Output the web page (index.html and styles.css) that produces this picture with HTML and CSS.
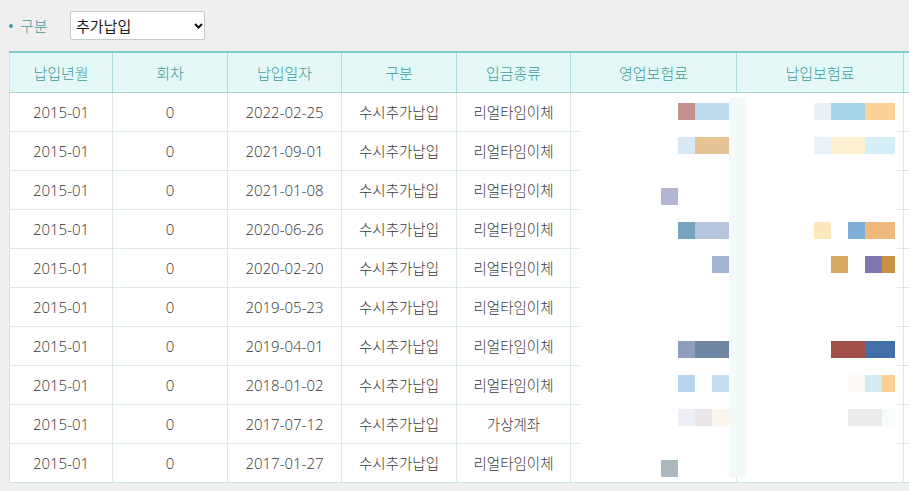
FILE: index.html
```html
<!DOCTYPE html>
<html lang="ko">
<head>
<meta charset="utf-8">
<title>추가납입 내역</title>
<link rel="stylesheet" href="styles.css">
</head>
<body>
<div class="page">
  <div class="filter">
    <span class="filter-label">구분</span>
    <div class="select-wrap">
      <select class="select">
        <option>추가납입</option>
      </select>
      <svg class="select-arrow" width="9" height="6" viewBox="0 0 9 6"><path d="M1 1 L4.5 4.5 L8 1" fill="none" stroke="#111" stroke-width="2"/></svg>
    </div>
  </div>

  <div class="table-wrap">
    <table class="grid">
      <colgroup>
        <col class="c1"><col class="c2"><col class="c3"><col class="c4"><col class="c5"><col class="c6"><col class="c7"><col class="c8">
      </colgroup>
      <thead>
        <tr>
          <th>납입년월</th><th>회차</th><th>납입일자</th><th>구분</th><th>입금종류</th><th>영업보험료</th><th>납입보험료</th><th></th>
        </tr>
      </thead>
      <tbody>
        <tr><td class="num">2015-01</td><td class="num">0</td><td class="num">2022-02-25</td><td>수시추가납입</td><td>리얼타임이체</td><td></td><td></td><td></td></tr>
        <tr><td class="num">2015-01</td><td class="num">0</td><td class="num">2021-09-01</td><td>수시추가납입</td><td>리얼타임이체</td><td></td><td></td><td></td></tr>
        <tr><td class="num">2015-01</td><td class="num">0</td><td class="num">2021-01-08</td><td>수시추가납입</td><td>리얼타임이체</td><td></td><td></td><td></td></tr>
        <tr><td class="num">2015-01</td><td class="num">0</td><td class="num">2020-06-26</td><td>수시추가납입</td><td>리얼타임이체</td><td></td><td></td><td></td></tr>
        <tr><td class="num">2015-01</td><td class="num">0</td><td class="num">2020-02-20</td><td>수시추가납입</td><td>리얼타임이체</td><td></td><td></td><td></td></tr>
        <tr><td class="num">2015-01</td><td class="num">0</td><td class="num">2019-05-23</td><td>수시추가납입</td><td>리얼타임이체</td><td></td><td></td><td></td></tr>
        <tr><td class="num">2015-01</td><td class="num">0</td><td class="num">2019-04-01</td><td>수시추가납입</td><td>리얼타임이체</td><td></td><td></td><td></td></tr>
        <tr><td class="num">2015-01</td><td class="num">0</td><td class="num">2018-01-02</td><td>수시추가납입</td><td>리얼타임이체</td><td></td><td></td><td></td></tr>
        <tr><td class="num">2015-01</td><td class="num">0</td><td class="num">2017-07-12</td><td>수시추가납입</td><td>가상계좌</td><td></td><td></td><td></td></tr>
        <tr><td class="num">2015-01</td><td class="num">0</td><td class="num">2017-01-27</td><td>수시추가납입</td><td>리얼타임이체</td><td></td><td></td><td></td></tr>
      </tbody>
    </table>

    <div class="mosaic" aria-hidden="true">
      <div class="strip"></div>
      <!-- row 1 -->
      <i style="grid-area:2/3;background:#c4918e"></i>
      <i style="grid-area:2/4/3/6;background:#c2dcef"></i>
      <i style="grid-area:2/11;background:#e8f0f8"></i>
      <i style="grid-area:2/12/3/14;background:#a9d5e8"></i>
      <i style="grid-area:2/14/3/16;background:#fdd199"></i>
      <!-- row 2 -->
      <i style="grid-area:4/3;background:#d8e8f5"></i>
      <i style="grid-area:4/4/5/6;background:#e6c493"></i>
      <i style="grid-area:4/11;background:#ebf3fa"></i>
      <i style="grid-area:4/12/5/14;background:#fdf0cf"></i>
      <i style="grid-area:4/14/5/16;background:#d5eff6"></i>
      <!-- row 3 -->
      <i style="grid-area:7/2;background:#b4b6d4"></i>
      <!-- row 4 -->
      <i style="grid-area:9/3;background:#76a4bd"></i>
      <i style="grid-area:9/4/10/6;background:#b6c6df"></i>
      <i style="grid-area:9/11;background:#fde8bd"></i>
      <i style="grid-area:9/13;background:#7fafd8"></i>
      <i style="grid-area:9/14/10/16;background:#efb87d"></i>
      <!-- row 5 -->
      <i style="grid-area:11/5;background:#a2b4d4"></i>
      <i style="grid-area:11/12;background:#d9a862"></i>
      <i style="grid-area:11/14;background:#8077ac"></i>
      <i style="grid-area:11/15;background:#c99048"></i>
      <!-- row 7 -->
      <i style="grid-area:16/3;background:#8e9cbe"></i>
      <i style="grid-area:16/4/17/6;background:#6e86a3"></i>
      <i style="grid-area:16/12/17/14;background:#a04f47"></i>
      <i style="grid-area:16/14/17/16;background:#426fa8"></i>
      <!-- row 8 -->
      <i style="grid-area:18/3;background:#b6d4ec"></i>
      <i style="grid-area:18/5;background:#c6dff2"></i>
      <i style="grid-area:18/13;background:#fdfaf5"></i>
      <i style="grid-area:18/14;background:#d1ecf5"></i>
      <i style="grid-area:18/15;background:#fdcf92"></i>
      <!-- row 9 -->
      <i style="grid-area:20/3;background:#eeeff5"></i>
      <i style="grid-area:20/4;background:#ebe7e9"></i>
      <i style="grid-area:20/5;background:#fdf6ec"></i>
      <i style="grid-area:20/13/21/15;background:#ebebeb"></i>
      <i style="grid-area:20/15;background:#f8fcfd"></i>
      <!-- row 10 -->
      <i style="grid-area:23/2;background:#abb9bf"></i>
    </div>
  </div>
</div>
</body>
</html>
```
FILE: styles.css
```css
* { box-sizing: border-box; }

html, body {
  margin: 0;
  padding: 0;
  background: #efefef;
  overflow: hidden;
  font-family: "Open Sans", "Noto Sans CJK KR", sans-serif;
}

.page {
  padding: 11px 0 0 9px;
  width: 909px;
  height: 491px;
  overflow: hidden;
}

.filter {
  display: flex;
  align-items: center;
  height: 29px;
}

.filter-label {
  display: flex;
  align-items: center;
  width: 61px;
  font-size: 15px;
  color: #3f9b9b;
  font-family: "Noto Sans CJK KR", sans-serif;
  font-weight: 300;
}

.filter-label::before {
  content: "";
  width: 4px;
  height: 4px;
  border-radius: 50%;
  background: #3f9b9b;
  margin-right: 7px;
}

.select-wrap {
  position: relative;
  width: 135px;
  height: 29px;
}

.select {
  appearance: none;
  -webkit-appearance: none;
  width: 100%;
  height: 100%;
  border: 1px solid #c8c8c8;
  border-radius: 2px;
  background: #fff;
  padding: 0 0 0 5px;
  font-family: "Noto Sans CJK KR", sans-serif;
  font-size: 15px;
  color: #1a1a1a;
  outline: none;
}

.select-arrow {
  position: absolute;
  right: 2px;
  top: 12px;
  pointer-events: none;
}

.table-wrap {
  position: relative;
  margin-top: 11px;
  width: 1100px;
}

.grid {
  border-collapse: collapse;
  table-layout: fixed;
  width: 1014px;
  font-size: 14.5px;
  font-family: "Noto Sans CJK KR", sans-serif;
  font-weight: 300;
}

.c1 { width: 103px; }
.c2 { width: 115px; }
.c3 { width: 114px; }
.c4 { width: 115px; }
.c5 { width: 114px; }
.c6 { width: 166px; }
.c7 { width: 167px; }
.c8 { width: 120px; }

.grid th {
  height: 40px;
  padding: 0;
  background: #e4f8f8;
  color: #3f9b9b;
  font-size: 15px;
  font-weight: 300;
  border-left: 1px solid #a9dcdc;
  border-right: 1px solid #a9dcdc;
  border-bottom: 1px solid #a6d9d9;
  border-top: 2px solid #80cccc;
}

.grid td {
  height: 39px;
  padding: 0;
  text-align: center;
  background: #fff;
  color: #3a3a3a;
  border: 1px solid #dfe8e8;
}

.grid td.num {
  font-family: "Open Sans", sans-serif;
  font-weight: 300;
  font-size: 15px;
  color: #333;
}

.grid td:first-child, .grid th:first-child { border-left-color: #cfe5e5; }

.grid tbody tr:last-child td { border-bottom: 1px solid #cfe5e5; }

.mosaic {
  position: absolute;
  left: 571px;
  top: 42px;
  width: 315px;
  height: 384px;
  background: #fff;
  display: grid;
  grid-template-columns: 81px repeat(13, 17px) 13px;
  grid-template-rows: 10px repeat(22, 17px);
}

.mosaic i { display: block; }

.strip {
  grid-column: 6;
  grid-row: 1 / -1;
  margin-top: 5px;
  background: #f4f9fa;
}
```
